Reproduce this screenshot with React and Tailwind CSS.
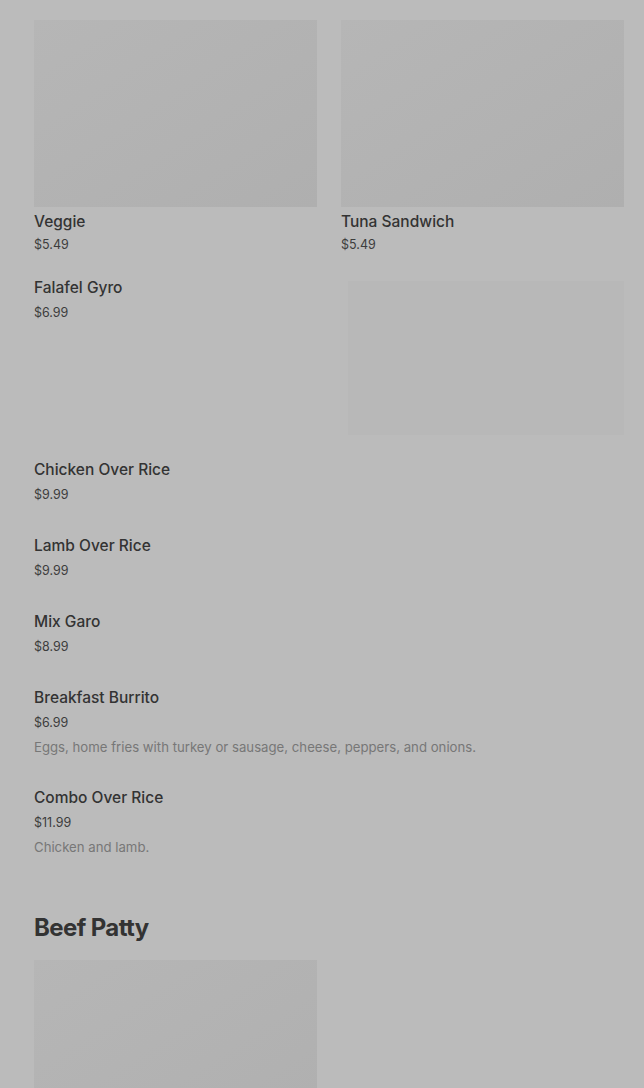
export default function App() {
  const cards = [
    { name: "Veggie", price: "$5.49" },
    { name: "Tuna Sandwich", price: "$5.49" },
  ];

  const items = [
    { name: "Chicken Over Rice", price: "$9.99" },
    { name: "Lamb Over Rice", price: "$9.99" },
    { name: "Mix Garo", price: "$8.99" },
    {
      name: "Breakfast Burrito",
      price: "$6.99",
      desc: "Eggs, home fries with turkey or sausage, cheese, peppers, and onions.",
    },
    { name: "Combo Over Rice", price: "$11.99", desc: "Chicken and lamb." },
  ];

  return (
    <div
      className="min-h-screen bg-[#bbbbbb] pl-[34px] pr-[20px] pt-[20px] text-[#333333]"
      style={{ fontFamily: "Inter, Roboto, sans-serif" }}
    >
      <div className="grid grid-cols-2 gap-6">
        {cards.map((c) => (
          <div key={c.name}>
            <div className="h-[187px] bg-gradient-to-br from-[#b6b6b6] to-[#afafaf]" />
            <div className="mt-[3px] text-[15.5px] leading-6 font-medium">{c.name}</div>
            <div className="text-[12.5px] leading-[22px] text-[#3d3d3d]">{c.price}</div>
          </div>
        ))}
      </div>

      <div className="mt-[20px] flex justify-between">
        <div>
          <div className="text-[15.5px] leading-6 font-medium">Falafel Gyro</div>
          <div className="text-[12.5px] leading-[26px] text-[#3d3d3d]">$6.99</div>
        </div>
        <div className="mt-[5px] h-[154px] w-[276px] bg-[#b8b8b8]" />
      </div>

      <div className="mt-[23px] flex flex-col gap-[26px]">
        {items.map((it) => (
          <div key={it.name}>
            <div className="text-[15.5px] leading-6 font-medium">{it.name}</div>
            <div className="text-[12.5px] leading-[26px] text-[#3d3d3d]">{it.price}</div>
            {it.desc && (
              <div className="mb-[2px] text-[13.2px] leading-[22px] text-[#777777]">{it.desc}</div>
            )}
          </div>
        ))}
      </div>

      <h2 className="mt-[52px] text-[24px] leading-8 font-bold tracking-tight">Beef Patty</h2>

      <div className="mt-[16px] grid grid-cols-2 gap-6">
        <div className="h-[187px] bg-gradient-to-br from-[#b6b6b6] to-[#afafaf]" />
      </div>
    </div>
  );
}
